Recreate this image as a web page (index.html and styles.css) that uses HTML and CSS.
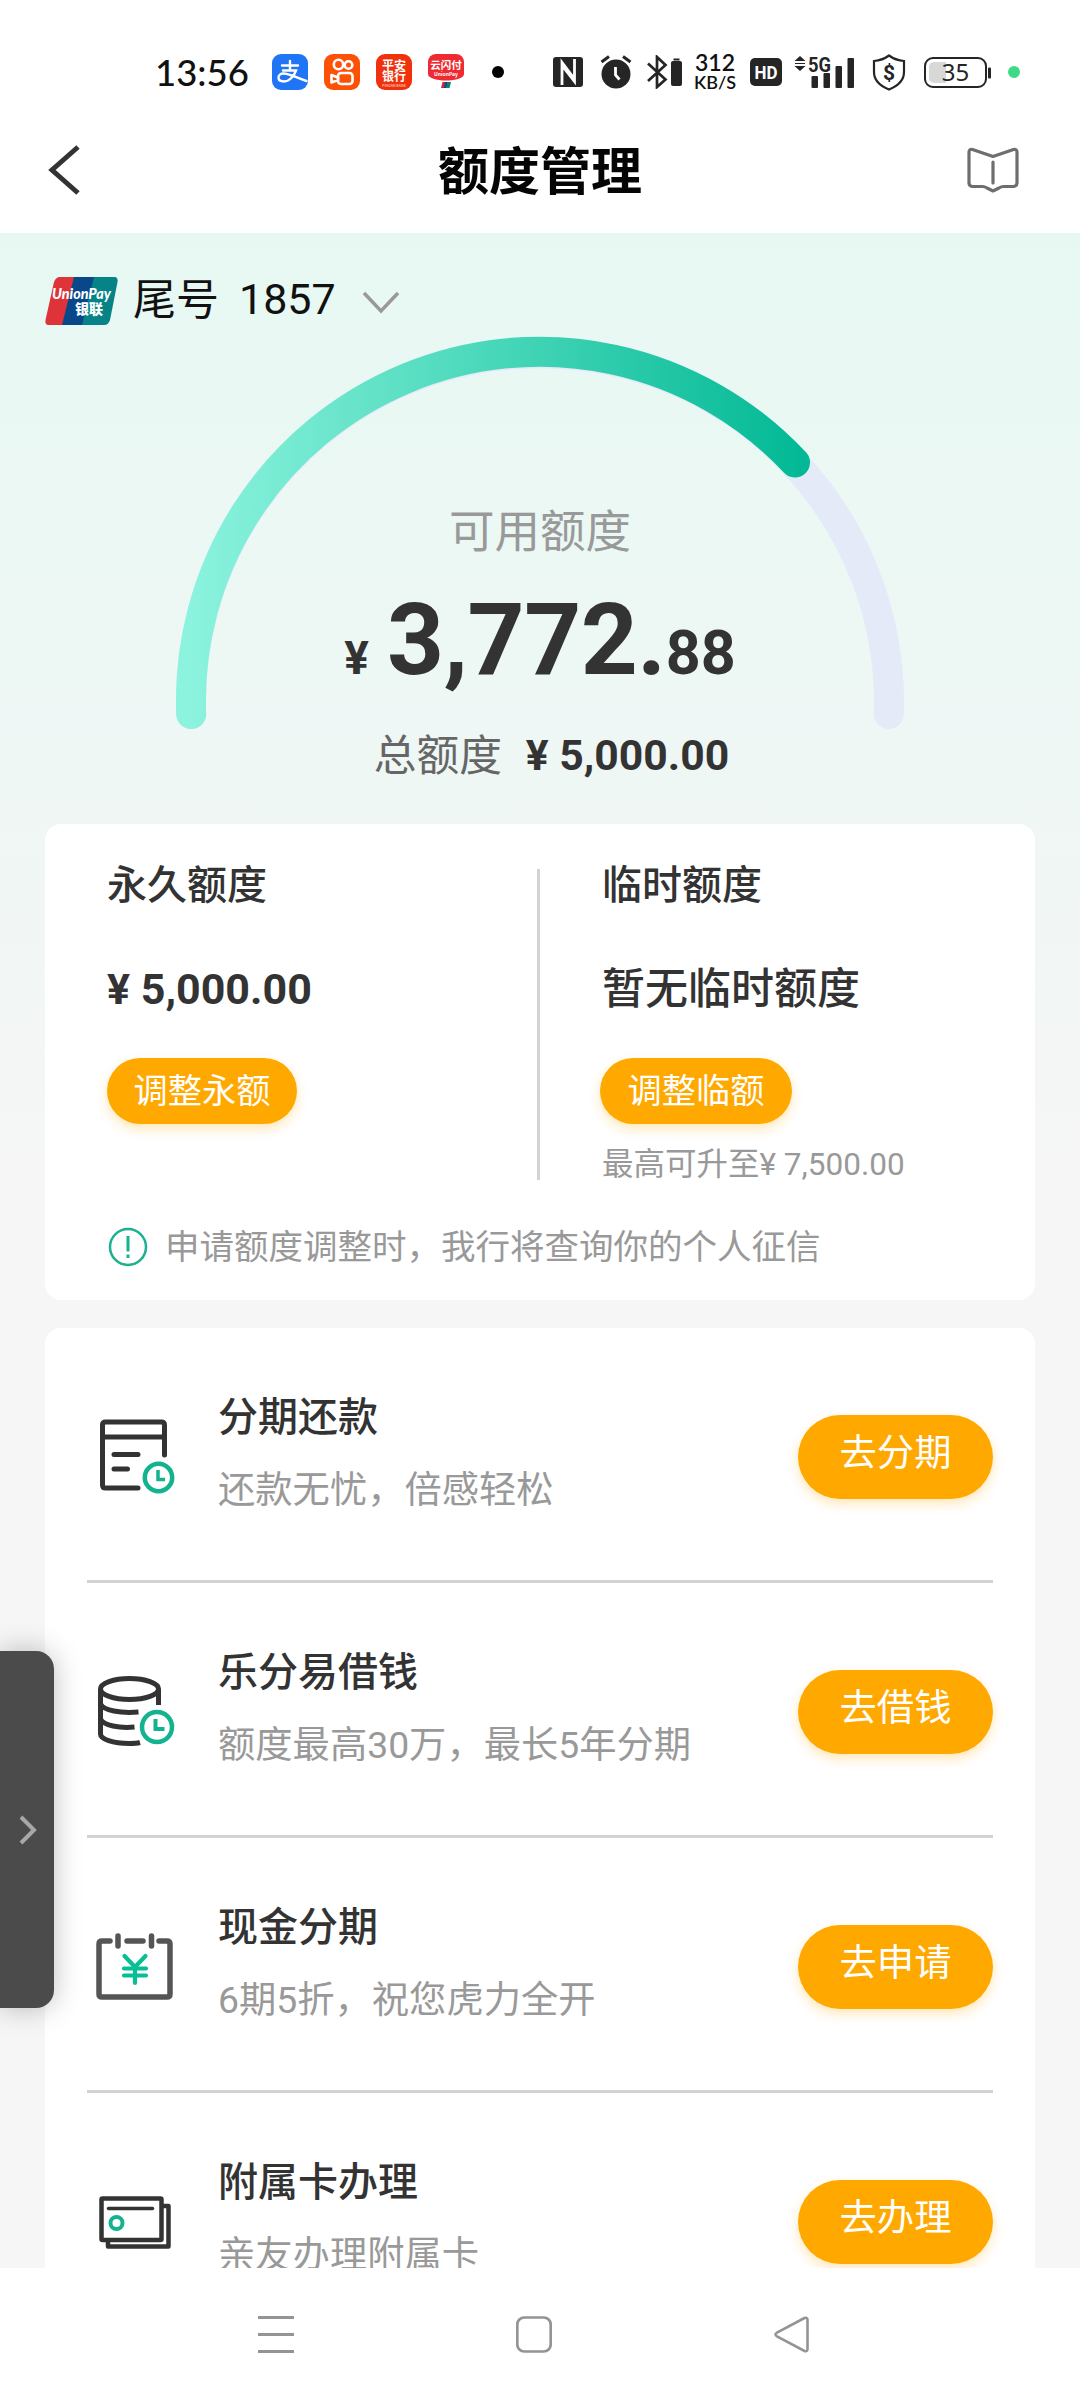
FILE: index.html
```html
<!DOCTYPE html>
<html lang="zh-CN">
<head>
<meta charset="utf-8">
<title>额度管理</title>
<link rel="stylesheet" href="styles.css">
</head>
<body>
<div class="screen">
  <header class="statusbar">
    <span class="clock">13:56</span>
    <svg class="app-icon alipay" width="36" height="36" viewBox="0 0 36 36">
      <rect width="36" height="36" rx="9" fill="#1f75f5"/>
      <g fill="none" stroke="#fff" stroke-width="2.4" stroke-linecap="round"><path d="M10 11.5h16M18 7v9M11 16.5h13c-2 6-7 11-12 11-3.500 0-5.500-1.800-5.500-4 0-2.400 2.200-4 5-4 6 0 12 4 23 7.500"/></g>
    </svg>
    <svg class="app-icon" width="36" height="36" viewBox="0 0 36 36">
      <rect width="36" height="36" rx="9" fill="#fd5206"/>
      <g fill="none" stroke="#fff" stroke-width="2.600" stroke-linejoin="round"><circle cx="14.500" cy="10.500" r="4.700"/><circle cx="24.500" cy="11" r="3.800"/><rect x="14" y="19" width="14.500" height="11" rx="3"/><path d="M14 23.500l-6.500-2.500v7.500l6.500-2.500z"/></g>
    </svg>
    <svg class="app-icon" width="36" height="36" viewBox="0 0 36 36">
      <rect width="36" height="36" rx="9" fill="#f0310c"/>
      <g class="icon-text" fill="#fff" text-anchor="middle"><text x="18" y="15.500" font-size="12">平安</text><text x="18" y="27" font-size="12">银行</text><text x="18" y="32.500" font-size="3.500" opacity=".6">PINGAN BANK</text></g>
    </svg>
    <svg class="app-icon" width="36" height="36" viewBox="0 0 36 36">
      <path d="M8 0h20a8 8 0 0 1 8 8v12c0 4-8 6.500-18 6.500S0 24 0 20V8a8 8 0 0 1 8-8z" fill="#ee2b33"/>
      <g class="icon-text" fill="#fff" text-anchor="middle"><text x="18" y="15" font-size="10.500">云闪付</text><text x="18" y="21.500" font-size="5">UnionPay</text></g>
      <path d="M14.500 28h3l-1.500 6h-3z" fill="#d62839"/><path d="M17 28h3l-1.500 6h-3z" fill="#124a7a"/><path d="M19.500 28h3.500l-1.500 6H18z" fill="#0a7f78"/>
    </svg>
    <i class="more-dot"></i>
    <svg class="nfc" width="30" height="30" viewBox="0 0 30 30">
      <rect width="30" height="30" rx="3" fill="#252525"/>
      <path d="M9 28V5.500l12.500 16.500M21.500 2v22.500L9 8.500" fill="none" stroke="#fff" stroke-width="2.800"/>
    </svg>
    <svg class="alarm" width="32" height="34" viewBox="0 0 32 34">
      <circle cx="16" cy="19" r="14.500" fill="#252525"/><path d="M1.500 7L9 1.500M30.500 7L23 1.500" stroke="#252525" stroke-width="3"/><path d="M15.500 12v8l4 4.500" fill="none" stroke="#fff" stroke-width="2.800"/>
    </svg>
    <svg class="bluetooth" width="35" height="34" viewBox="0 0 35 34">
      <path d="M1 8.500L18.500 24.500 10 32V2l8.500 8L1 26" fill="none" stroke="#252525" stroke-width="2.700"/><rect x="24" y="6" width="11" height="25" rx="2" fill="#252525"/><rect x="26.500" y="3.500" width="6" height="2" fill="#252525"/>
    </svg>
    <span class="speed"><b>312</b><b class="unit">KB/S</b></span>
    <svg class="hd" width="32" height="28" viewBox="0 0 32 28">
      <rect width="32" height="28" rx="5" fill="#252525"/><text class="icon-latin" x="16" y="21" font-size="19" textLength="23" lengthAdjust="spacingAndGlyphs" text-anchor="middle" fill="#fff">HD</text>
    </svg>
    <svg class="signal" width="60" height="34" viewBox="0 0 60 34">
      <path d="M6 1l5.500 5H.5zM6 16l5.500-5H.5z" fill="#252525"/><path d="M1 8.500h10" stroke="#252525" stroke-width="1"/>
      <text class="icon-latin" x="14" y="16.500" font-size="20" textLength="23" lengthAdjust="spacingAndGlyphs" fill="#252525">5G</text>
      <g fill="#252525"><rect x="17.500" y="21" width="6.500" height="12" rx="1"/><rect x="29.500" y="18" width="6.500" height="15" rx="1"/><rect x="41.500" y="11" width="6.500" height="22" rx="1"/><rect x="53.500" y="3" width="6.500" height="30" rx="1"/></g>
    </svg>
    <svg class="shield" width="34" height="37" viewBox="0 0 34 37">
      <path d="M17 1.500c4 3 9 5 15 5.500v11c0 8-5 13.500-15 17.500C7 31.500 2 26 2 18V7c6-.5 11-2.500 15-5.500z" fill="none" stroke="#252525" stroke-width="2.200"/><text class="icon-latin" x="17" y="25.500" font-size="21" text-anchor="middle" fill="#252525">$</text>
    </svg>
    <svg class="battery" width="68" height="31" viewBox="0 0 68 31">
      <rect x="1" y="1" width="61" height="29" rx="8" fill="none" stroke="#252525" stroke-width="2"/><path d="M10 5h12v21H10a5 5 0 0 1-5-5V10a5 5 0 0 1 5-5z" fill="#d8d8d8"/><rect x="64" y="10.500" width="3" height="11" rx="1" fill="#252525"/><text class="icon-number" x="31.500" y="24" font-size="24" text-anchor="middle" fill="#252525">35</text>
    </svg>
    <i class="active-dot"></i>
  </header>

  <nav class="titlebar">
    <svg width="34" height="50" viewBox="0 0 34 50"><path d="M30 2L4 25l26 23" fill="none" stroke="#333" stroke-width="5"/></svg>
    <h1>额度管理</h1>
    <svg width="52" height="46" viewBox="0 0 52 46"><path d="M26 9.500L5.500 2.500C3.500 2 2 3 2 5v31c0 2 1 3 3 3.500h10.500c2 0 3 .5 4.500 1.500l6 3 6-3c1.500-1 2.500-1.500 4.500-1.500H47c2-.5 3-1.500 3-3.500V5c0-2-1.500-3-3.500-2.500zM26 15v21" fill="none" stroke="#6e6e6e" stroke-width="3.200" stroke-linejoin="round" stroke-linecap="round"/></svg>
  </nav>

  <main class="content">
    <div class="card-picker">
      <svg width="73" height="48" viewBox="0 0 73 48">
        <path d="M15 0h20L24 48H4c-3 0-4-2-3.500-5L9 5c1-3 3-5 6-5z" fill="#de3339"/>
        <path d="M29 0h24L42 48H17z" fill="#08488a"/><path d="M49 0h20c3 0 4 2 3.500 5L65 43c-1 3-3 5-6 5H37z" fill="#068386"/>
        <text class="pay-latin" x="7" y="22" font-size="14.500" textLength="59" lengthAdjust="spacingAndGlyphs">UnionPay</text><text class="pay-cn" x="30" y="36.500" font-size="14">银联</text>
      </svg>
      <span class="tail">尾号</span><span class="tail-number">1857</span>
      <svg class="down" width="38" height="24" viewBox="0 0 38 24"><path d="M2 2l17 18L36 2" fill="none" stroke="#999" stroke-width="3.500"/></svg>
    </div>

    <section class="gauge">
      <svg class="dial" width="730" height="394" viewBox="175 335 730 394">
        <defs><linearGradient id="arc" gradientUnits="userSpaceOnUse" x1="190" y1="0" x2="800" y2="0"><stop offset="0" stop-color="#8cf3de"/><stop offset=".5" stop-color="#48d7b9"/><stop offset="1" stop-color="#03b995"/></linearGradient></defs>
        <g fill="none" stroke-width="30" stroke-linecap="round"><path d="M191.200 713A349 349 0 1 1 888.800 713" stroke="#e4eaf8"/><path d="M191.200 713A349 349 0 0 1 795 461.500" stroke="url(#arc)"/></g>
      </svg>
      <div class="dial-text">
        <div class="label">可用额度</div>
        <div class="available"><span class="yen">¥</span><span class="integer">3,772.</span><span class="cents">88</span></div>
        <div class="total"><span>总额度</span><b>¥ 5,000.00</b></div>
      </div>
    </section>

    <section class="card limits">
      <div class="limit-columns">
        <div class="limit">
          <h2>永久额度</h2>
          <p class="amount">¥ 5,000.00</p>
          <button class="pill">调整永额</button>
        </div>
        <div class="limit temporary">
          <h2>临时额度</h2>
          <p class="amount none">暂无临时额度</p>
          <button class="pill">调整临额</button>
          <p class="hint">最高可升至¥ 7,500.00</p>
        </div>
      </div>
      <div class="notice">
        <svg width="40" height="40" viewBox="0 0 40 40"><circle cx="20" cy="20" r="18" fill="none" stroke="#1cb18f" stroke-width="2.500"/><path d="M20 9v15.500M20 27.500v3.500" stroke="#1cb18f" stroke-width="3"/></svg>
        <span>申请额度调整时，我行将查询你的个人征信</span>
      </div>
    </section>

    <section class="card services">
      <article class="service">
        <svg class="service-icon" width="80" height="80" viewBox="0 0 80 80">
          <g fill="none" stroke="#333" stroke-width="5" stroke-linecap="round" stroke-linejoin="round"><path d="M42 73H9.500q-3 0-3-3V10q0-3 3-3h56q3 0 3 3v30M6.500 22h62M18 39.500h24M18 54h13.500"/></g>
          <g fill="none" stroke="#14b38f"><circle cx="62.500" cy="62.500" r="13.700" stroke-width="4.500"/><path d="M62 55v9.500h7" stroke-width="3.500"/></g>
        </svg>
        <div class="service-copy"><h3>分期还款</h3><p>还款无忧，倍感轻松</p></div>
        <button class="action">去分期</button>
      </article>
      <article class="service">
        <svg class="service-icon" width="80" height="80" viewBox="0 0 80 80">
          <g fill="none" stroke="#333" stroke-width="5"><ellipse cx="33.500" cy="19" rx="29" ry="10.500"/><path d="M62.500 19v16M4.500 19v45c0 5 12 9.500 29 9.500 5 0 8-.3 10.500-1M4.500 34c3 6.500 20 9.500 38 8M4.500 49c3 6.500 19 9.500 34 8"/></g>
          <g fill="none" stroke="#14b38f"><circle cx="61" cy="57" r="15" stroke-width="4.500"/><path d="M59.500 49v10h9" stroke-width="4"/></g>
        </svg>
        <div class="service-copy"><h3>乐分易借钱</h3><p>额度最高30万，最长5年分期</p></div>
        <button class="action">去借钱</button>
      </article>
      <article class="service">
        <svg class="service-icon" width="80" height="80" viewBox="0 0 80 80">
          <g fill="none" stroke="#555" stroke-width="5.500" stroke-linecap="round" stroke-linejoin="round"><path d="M14 16H6q-3 0-3 3v50q0 3 3 3h65q3 0 3-3V19q0-3-3-3h-8M31 16h16M22 11v10M55.500 11v10"/></g>
          <path d="M28.500 31L39 42l10.500-11M28 43.500h22M28 50.500h22M39 42v16" fill="none" stroke="#08bf95" stroke-width="4.200" stroke-linecap="round"/>
        </svg>
        <div class="service-copy"><h3>现金分期</h3><p>6期5折，祝您虎力全开</p></div>
        <button class="action">去申请</button>
      </article>
      <article class="service">
        <svg class="service-icon" width="80" height="80" viewBox="0 0 80 80">
          <g fill="none" stroke="#333" stroke-width="4.500" stroke-linejoin="round"><path d="M12 62v4.500h60.500V26H65"/><rect x="5.500" y="18.500" width="60" height="41.500" rx="1"/><path d="M12.500 28.500h44" stroke-width="3.500" stroke-linecap="round"/></g>
          <circle cx="20.500" cy="43" r="6" fill="none" stroke="#14b38f" stroke-width="4"/>
        </svg>
        <div class="service-copy"><h3>附属卡办理</h3><p>亲友办理附属卡</p></div>
        <button class="action">去办理</button>
      </article>
    </section>
  </main>

  <footer class="navbar">
    <svg width="36" height="37" viewBox="0 0 36 37"><path d="M0 1.500h36M0 18.500h36M0 35.500h36" stroke="#949494" stroke-width="3"/></svg>
    <svg width="36" height="37" viewBox="0 0 36 37"><rect x="1.300" y="1.500" width="33.400" height="34" rx="7" fill="none" stroke="#949494" stroke-width="2.700"/></svg>
    <svg width="36" height="37" viewBox="0 0 36 37"><path d="M30.500 2L3 16.500q-3 2 0 4L30.500 35q3 1 3-2V4q0-3-3-2z" fill="none" stroke="#949494" stroke-width="2.600"/></svg>
  </footer>

  <aside class="side-tab"><svg width="18" height="30" viewBox="0 0 18 30"><path d="M2 2l13 13L2 28" fill="none" stroke="#a8a8a8" stroke-width="4"/></svg></aside>
</div>
</body>
</html>
```
FILE: styles.css
```css
* { box-sizing: border-box; margin: 0; padding: 0; }
body { background: #fff; font-family: Roboto, "Noto Sans CJK SC", sans-serif; color: #333; }
button { border: 0; font: inherit; }
svg { display: block; flex: none; }

.screen { position: relative; display: flex; flex-direction: column; width: 1080px; height: 2400px; overflow: hidden; }

.statusbar { display: flex; align-items: center; height: 108px; padding: 36px 0 0 155px; flex: none; }
.clock { width: 101px; font: 500 36.500px/44px Lato, sans-serif; color: #111; white-space: nowrap; }
.app-icon { margin-left: 16px; }
.more-dot, .active-dot { width: 12px; height: 12px; border-radius: 50%; background: #000; flex: none; }
.more-dot { margin: 0 49px 0 28px; }
.active-dot { margin-left: 16px; background: #3ddc84; }
.icon-text { font-family: "Noto Sans CJK SC", sans-serif; font-weight: 700; }
.icon-latin { font-family: Roboto, sans-serif; font-weight: 700; }
.icon-number { font-family: "Noto Sans", sans-serif; }
.alarm { margin-left: 17px; }
.bluetooth { margin-left: 15px; }
.speed { display: flex; flex-direction: column; align-items: center; width: 42px; margin-left: 12px; color: #111; }
.speed b { font: 600 23px/21px Lato, sans-serif; }
.speed .unit { font: 600 18px/19px Lato, sans-serif; }
.hd { margin-left: 14px; }
.signal { margin-left: 12px; }
.shield { margin-left: 18px; }
.battery { margin-left: 18px; }

.titlebar { display: grid; grid-template-columns: 52px 1fr 52px; align-items: center; justify-items: center; height: 125px; padding: 0 61px; flex: none; }
.titlebar svg:first-child { justify-self: start; margin-left: -13px; margin-top: -2px; }
.titlebar svg:last-child { margin-top: -2px; }
.titlebar h1 { font-size: 51px; line-height: 60px; font-weight: 700; color: #050505; padding-top: 4px; }

.content { display: flex; flex-direction: column; height: 2035px; padding: 44px 45px 0; overflow: hidden; flex: none;
  background: linear-gradient(#e7f8f3 0, #ebf8f4 250px, #eff7f5 550px, #f6f6f6 950px); }

.card-picker { display: flex; align-items: center; height: 48px; color: #111; font-size: 43px; line-height: 52px; }
.pay-latin { font-family: Lato, sans-serif; font-weight: 900; font-style: italic; fill: #fff; }
.pay-cn { font-family: "Noto Sans CJK SC", sans-serif; font-weight: 900; fill: #fff; }
.tail { margin: -3px 0 0 15px; }
.tail-number { margin: -4px 0 0 20px; }
.down { margin: 4px 0 0 26px; }

.gauge { display: grid; height: 488px; justify-content: center; margin-top: 11px; flex: none; }
.dial, .dial-text { grid-area: 1 / 1; }
.dial-text { display: flex; flex-direction: column; align-items: center; padding-top: 169px; }
.label { font-size: 45.500px; line-height: 56px; color: #999; }
.available { display: flex; align-items: baseline; line-height: 120px; height: 120px; margin-top: 19px; font-weight: 700; }
.yen { font-size: 46px; }
.integer { font-size: 99.500px; margin-left: 18px; letter-spacing: -.5px; }
.cents { font-size: 61px; }
.total { display: flex; align-items: center; gap: 24px; height: 56px; margin-top: 27px; padding-left: 23px; font-size: 42.700px; color: #666; }
.total span { margin-top: -6px; }
.total b { color: #333; }

.card { background: #fff; border-radius: 16px; flex: none; }
.limits { height: 476px; padding: 45px 62px 0; }
.limit-columns { display: grid; grid-template-columns: 430px 1fr; height: 311px; }
.limit { display: flex; flex-direction: column; align-items: flex-start; }
.temporary { border-left: 3px solid #d3d3d3; padding-left: 62px; }
.limit h2 { font-size: 40px; line-height: 48px; height: 48px; margin-top: -7px; font-weight: 500; }
.amount { font-size: 43px; line-height: 50px; height: 50px; margin-top: 54px; font-weight: 700; white-space: nowrap; }
.amount.none { font-weight: 500; }
.pill { width: 190px; height: 66px; margin-top: 44px; border-radius: 33px; background: #ffa800; box-shadow: 0 5px 12px rgba(255,168,0,.28); color: #fff; font-size: 34.200px; line-height: 64px; }
.temporary .pill { width: 192px; margin-left: -2px; }
.hint { font-size: 31.500px; line-height: 40px; margin: 21px 0 -5px; color: #999; white-space: nowrap; }
.notice { display: flex; align-items: center; gap: 17px; height: 44px; margin: 45px 0 0 1px; color: #999; font-size: 34.500px; line-height: 42px; white-space: nowrap; }

.services { height: 1020px; margin-top: 28px; padding: 0 42px; }
.service { display: flex; height: 255px; border-bottom: 3px solid #d3d3d3; }
.service:last-child { border: 0; }
.service-icon { margin: 87px 0 0 9px; }
.service-copy { flex: 1; padding: 65px 0 0 42px; white-space: nowrap; }
.service-copy h3 { font-size: 40px; line-height: 50px; font-weight: 500; }
.service-copy p { font-size: 37.300px; line-height: 48px; margin-top: 23px; color: #999; }
.action { width: 195px; height: 84px; margin-top: 87px; padding-bottom: 8px; border-radius: 42px; background: #ffa800; box-shadow: 0 5px 12px rgba(255,168,0,.28); color: #fff; font-size: 37.300px; line-height: 76px; }

.navbar { display: flex; justify-content: space-between; height: 132px; padding: 48px 270px 0 258px; flex: none; background: #fff; }

.side-tab { position: absolute; left: 0; top: 1651px; width: 54px; height: 357px; display: flex; align-items: center; padding: 0 0 0 19px; background: #4b4b4b; border-radius: 0 18px 18px 0; box-shadow: 0 0 28px rgba(0,0,0,.25); }
```
